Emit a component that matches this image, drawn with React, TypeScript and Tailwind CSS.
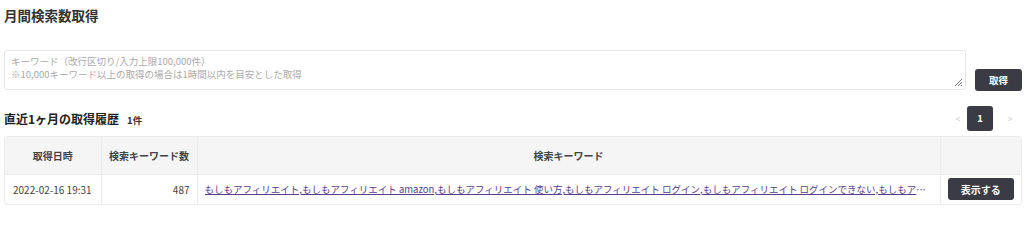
import React from "react";

const keywords =
  "もしもアフィリエイト,もしもアフィリエイト amazon,もしもアフィリエイト 使い方,もしもアフィリエイト ログイン,もしもアフィリエイト ログインできない,もしもアフィリエイト 審査,もしもアフィリエイト 楽天";

const App = (): React.ReactElement => {
  return (
    <div
      className="w-[1024px] h-[230px] bg-white pl-[4px] pr-[2px] text-[#333]"
      style={{ fontFamily: '"Noto Sans CJK JP", "Noto Sans", sans-serif' }}
    >
      <h1 className="pt-[6px] text-[13.5px] leading-[18px] font-bold text-[#333]">月間検索数取得</h1>

      <div className="mt-[26px] flex items-end">
        <div className="relative w-[962px] h-[40px] rounded-[3px] border border-[#e6e6e6] bg-white">
          <div className="px-[6px] pt-[4px] text-[9.5px] leading-[13px] text-[#aaa]">
            <p>キーワード（改行区切り/入力上限100,000件）</p>
            <p>※10,000キーワード以上の取得の場合は1時間以内を目安とした取得</p>
          </div>
          <svg className="absolute right-[2px] bottom-[2px]" width="9" height="9" viewBox="0 0 9 9">
            <path d="M8 1L1 8M8 4L4 8M8 7L7 8" stroke="#666" strokeWidth="0.9" />
          </svg>
        </div>
        <button className="ml-[9px] mb-[-1px] w-[47px] h-[22px] rounded-[3px] bg-[#3b3b45] text-white text-[9.5px] font-bold">
          取得
        </button>
      </div>

      <div className="mt-[16px] flex items-center justify-between">
        <div className="flex items-baseline">
          <span className="text-[12px] font-bold text-[#222]">直近1ヶ月の取得履歴</span>
          <span className="ml-[8px] text-[9.5px] font-bold text-[#333]">1件</span>
        </div>
        <div className="flex items-center mr-[5px]">
          <span className="text-[9px] text-[#ccc] w-[14px] text-center">&lt;</span>
          <span className="ml-[2px] w-[26px] h-[25px] rounded-[3px] bg-[#3b3b45] text-white text-[9.5px] font-bold flex items-center justify-center">
            1
          </span>
          <span className="ml-[10px] text-[9px] text-[#ccc] w-[14px] text-center">&gt;</span>
        </div>
      </div>

      <div className="mt-[5px] rounded-[3px] border border-[#ececec] overflow-hidden">
        <table className="w-full table-fixed border-collapse">
          <colgroup>
            <col className="w-[96px]" />
            <col className="w-[96px]" />
            <col />
            <col className="w-[81px]" />
          </colgroup>
          <thead>
            <tr className="h-[37px] bg-[#f5f5f5] text-[10px] font-bold text-[#444]">
              <th className="border-r border-b border-[#ececec]">取得日時</th>
              <th className="border-r border-b border-[#ececec]">検索キーワード数</th>
              <th className="border-r border-b border-[#ececec]">検索キーワード</th>
              <th className="border-b border-[#ececec]"></th>
            </tr>
          </thead>
          <tbody>
            <tr className="h-[30px] text-[10px] text-[#444]">
              <td className="border-r border-[#ececec] pl-[8px] whitespace-nowrap">2022-02-16 19:31</td>
              <td className="border-r border-[#ececec] pr-[7px] text-right">487</td>
              <td className="border-r border-[#ececec] pl-[7px] pr-[12px]">
                <a href="#" className="block truncate text-[9.5px] text-[#5a3d8c] underline">
                  {keywords}
                </a>
              </td>
              <td className="text-center">
                <button className="w-[66px] h-[22px] rounded-[3px] bg-[#3b3b45] text-white text-[10px] font-bold">
                  表示する
                </button>
              </td>
            </tr>
          </tbody>
        </table>
      </div>
    </div>
  );
};

export default App;
